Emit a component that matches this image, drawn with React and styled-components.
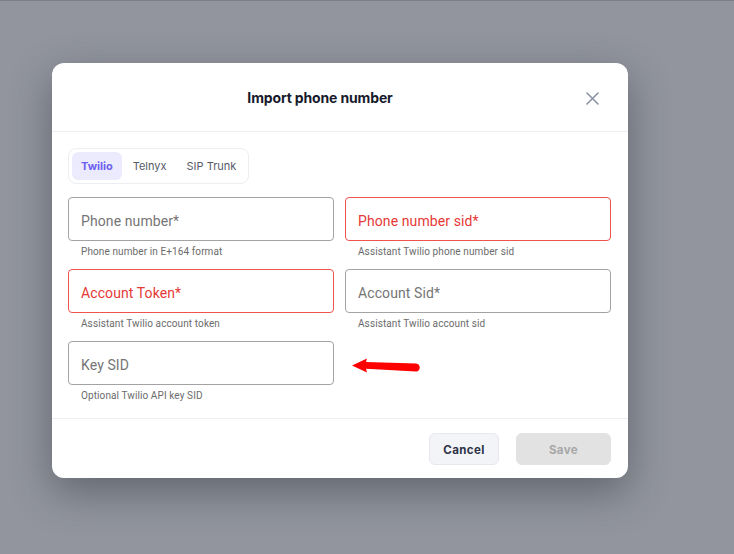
import React from 'react';
import styled, { createGlobalStyle } from 'styled-components';

const GlobalStyle = createGlobalStyle`
  html, body {
    margin: 0;
    padding: 0;
  }
  body {
    background-color: #92959e;
    font-family: Inter, "Noto Sans", sans-serif;
  }
`;

const Backdrop = styled.div`
  min-height: 554px;
  box-sizing: border-box;
  border-top: 1px solid #7c7f88;
  padding: 62px 0 0 52px;
`;

const Modal = styled.div`
  position: relative;
  width: 576px;
  background: #fff;
  border-radius: 12px;
  box-shadow: 0 14px 40px rgba(40, 44, 52, 0.45);
`;

const Header = styled.div`
  height: 68px;
  display: flex;
  align-items: center;
  justify-content: center;
  padding-right: 40px;
  position: relative;
  border-bottom: 1px solid #eceef2;
`;

const Title = styled.h2`
  margin: 0;
  font-size: 14px;
  font-weight: 700;
  letter-spacing: -0.15px;
  color: #161a2b;
`;

const CloseButton = styled.button`
  position: absolute;
  right: 28px;
  top: 27px;
  width: 16px;
  height: 16px;
  padding: 0;
  border: none;
  background: none;
  display: flex;
  align-items: center;
  justify-content: center;
  color: #8b93a5;
  cursor: pointer;
`;

const Body = styled.div`
  padding: 16px 17px 5px 16px;
`;

const Tabs = styled.div`
  display: inline-flex;
  gap: 2px;
  padding: 3px;
  border: 1px solid #eceef2;
  border-radius: 8px;
  margin-bottom: 13px;
`;

const Tab = styled.button`
  height: 28px;
  padding: 0 9px;
  border: none;
  border-radius: 6px;
  background: ${(p) => (p.$active ? '#ecebfd' : 'transparent')};
  color: ${(p) => (p.$active ? '#6d5ef0' : '#555a66')};
  font-family: Inter, "Noto Sans", sans-serif;
  font-size: 11px;
  font-weight: ${(p) => (p.$active ? 700 : 400)};
  cursor: pointer;
`;

const Grid = styled.div`
  display: grid;
  grid-template-columns: 266px 266px;
  column-gap: 11px;
`;

const Field = styled.div`
  height: 72px;
`;

const InputBox = styled.div`
  height: 44px;
  box-sizing: border-box;
  border: 1px solid ${(p) => (p.$error ? '#ef5350' : '#a3a3a3')};
  border-radius: 4px;
  display: flex;
  align-items: center;
  padding: 3px 12px 0;
  font-family: Roboto, "Liberation Sans", sans-serif;
  font-size: 14px;
  letter-spacing: 0.1px;
  color: ${(p) => (p.$error ? '#e53935' : '#757575')};
`;

const Helper = styled.div`
  margin: 5px 0 0 13px;
  font-family: Roboto, "Liberation Sans", sans-serif;
  font-size: 10px;
  letter-spacing: 0.1px;
  color: #6b6b6b;
`;

const Footer = styled.div`
  display: flex;
  justify-content: flex-end;
  gap: 17px;
  padding: 14px 17px 13px;
  border-top: 1px solid #eceef2;
`;

const Button = styled.button`
  height: 32px;
  width: ${(p) => p.$width}px;
  border-radius: 6px;
  border: 1px solid ${(p) => (p.$muted ? '#e2e2e2' : '#e6e8ee')};
  background: ${(p) => (p.$muted ? '#e2e2e2' : '#f3f4f7')};
  color: ${(p) => (p.$muted ? '#a7a7a7' : '#2c3245')};
  font-family: Inter, "Noto Sans", sans-serif;
  font-size: 11.5px;
  font-weight: 700;
  letter-spacing: 0.4px;
  padding-top: 2px;
  cursor: pointer;
`;

const Arrow = styled.svg`
  position: absolute;
  left: 297px;
  top: 292px;
`;

const fields = [
  { label: 'Phone number*', help: 'Phone number in E+164 format' },
  { label: 'Phone number sid*', help: 'Assistant Twilio phone number sid', error: true },
  { label: 'Account Token*', help: 'Assistant Twilio account token', error: true },
  { label: 'Account Sid*', help: 'Assistant Twilio account sid' },
  { label: 'Key SID', help: 'Optional Twilio API key SID' },
];

const App = () => (
  <>
    <GlobalStyle />
    <Backdrop>
      <Modal>
        <Header>
          <Title>Import phone number</Title>
          <CloseButton aria-label="Close">
            <svg width="13" height="13" viewBox="0 0 13 13">
              <path d="M1 1L12 12M12 1L1 12" stroke="currentColor" strokeWidth="1.6" strokeLinecap="round" />
            </svg>
          </CloseButton>
        </Header>
        <Body>
          <Tabs>
            <Tab $active>Twilio</Tab>
            <Tab>Telnyx</Tab>
            <Tab>SIP Trunk</Tab>
          </Tabs>
          <Grid>
            {fields.map((f) => (
              <Field key={f.label}>
                <InputBox $error={f.error}>{f.label}</InputBox>
                <Helper>{f.help}</Helper>
              </Field>
            ))}
          </Grid>
        </Body>
        <Footer>
          <Button $width={70}>Cancel</Button>
          <Button $width={95} $muted>Save</Button>
        </Footer>
        <Arrow width="74" height="20" viewBox="0 0 74 20">
          <path d="M3 10.5L18 3.5L17 7L67 8.5C72 8.7 72 16.7 67 16.5L17 13.8L18 17.5Z" fill="#ff0000" />
        </Arrow>
      </Modal>
    </Backdrop>
  </>
);

export default App;
